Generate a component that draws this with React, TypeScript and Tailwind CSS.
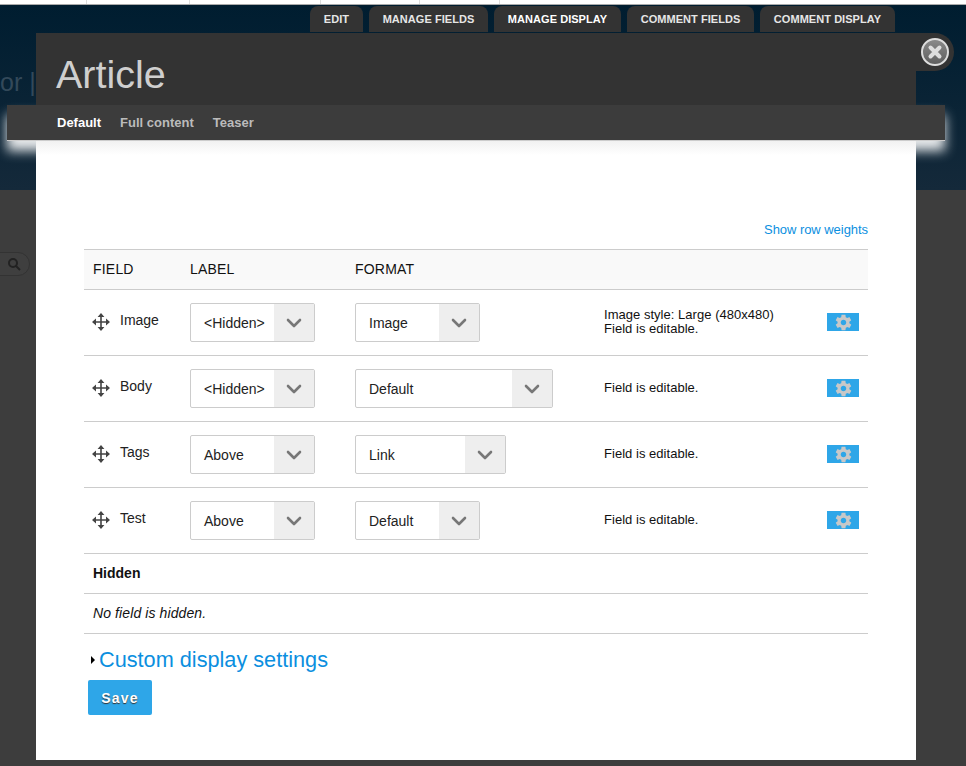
import React from "react";
import { ChevronDown } from "lucide-react";
import { IoMdSettings } from "react-icons/io";

const tabs = [
  { t: "EDIT", w: "w-[53px]" },
  { t: "MANAGE FIELDS", w: "w-[119px]" },
  { t: "MANAGE DISPLAY", w: "w-[127px]", active: true },
  { t: "COMMENT FIELDS", w: "w-[127px]" },
  { t: "COMMENT DISPLAY", w: "w-[135px]" },
];

function MoveIcon() {
  return (
    <svg width="18" height="18" viewBox="0 0 18 18" className="-mt-[1px] shrink-0">
      <path d="M9 3v12M3 9h12" stroke="#444" strokeWidth="1.6" fill="none" />
      <path d="M9 0 12.4 4H5.6zM9 18 5.6 14h6.8zM0 9 4 5.6v6.8zM18 9 14 12.4V5.6z" fill="#444" />
    </svg>
  );
}

function Select({ value, width }: { value: string; width: string }) {
  return (
    <div className={`flex h-[39px] ${width} items-stretch overflow-hidden rounded-[2px] border border-[#ccc] bg-white`}>
      <div className="flex flex-1 items-center pl-[13px] pt-[2px] text-[14px] text-[#222]">{value}</div>
      <div className="flex w-[40px] items-center justify-center bg-[#eeeeee]">
        <ChevronDown size={24} strokeWidth={2.6} className="text-[#777]" />
      </div>
    </div>
  );
}

const rows = [
  { name: "Image", label: "<Hidden>", fmt: "Image", w: "w-[125px]", lines: ["Image style: Large (480x480)", "Field is editable."] },
  { name: "Body", label: "<Hidden>", fmt: "Default", w: "w-[198px]", lines: ["Field is editable."] },
  { name: "Tags", label: "Above", fmt: "Link", w: "w-[151px]", lines: ["Field is editable."] },
  { name: "Test", label: "Above", fmt: "Default", w: "w-[125px]", lines: ["Field is editable."] },
];

export default function App() {
  return (
    <div className="relative h-[766px] w-[966px] overflow-hidden bg-[#3d3d3d] font-['Liberation_Sans',Arial,sans-serif]">
      {/* Page behind the overlay */}
      <div className="flex h-[4px] bg-white">
        <div className="w-[87px] border-r border-[#ddd]" />
        <div className="w-[103px] border-r border-[#ddd]" />
        <div className="w-[131px] border-r border-[#ddd]" />
        <div className="w-[99px] border-r border-[#ddd]" />
        <div className="w-[80px] border-r border-[#ddd]" />
      </div>
      <div className="h-[1px] bg-[#aaa]" />
      <div className="flex h-[185px] flex-col bg-gradient-to-b from-[#001d30] to-[#14293a]">
        <div className="flex justify-end gap-[6px] pr-[71px] pt-[1px]">
          {tabs.map((x) => (
            <div
              key={x.t}
              className={`flex h-[26px] ${x.w} items-center justify-center rounded-t-[8px] bg-[#333] text-[11px] font-bold tracking-[0.05px] ${x.active ? "text-white" : "text-[#e6e6e6]"}`}
            >
              {x.t}
            </div>
          ))}
        </div>
        <div className="mt-[35px] text-[25px] leading-[30px] text-[#33495a]">or |</div>
      </div>
      <div className="absolute left-[-20px] top-[252px] flex h-[24px] w-[50px] items-center justify-end rounded-full border border-[#333] bg-[#3f3f3f] pr-[8px]">
        <svg width="14" height="14" viewBox="0 0 14 14">
          <circle cx="6" cy="6" r="4" stroke="#222" strokeWidth="2" fill="none" />
          <path d="M9 9l4 4" stroke="#222" strokeWidth="2" />
        </svg>
      </div>

      {/* Modal */}
      <div className="absolute left-[36px] top-[33px] flex h-[727px] w-[880px] flex-col bg-white">
        <div className="relative z-20 h-[72px] bg-[#333] pl-[20px] pt-[17px] text-[39.5px] leading-[48px] text-[#cfcfcf]">Article</div>
        <div className="relative z-10 -ml-[29px] -mr-[29px] flex h-[36px] w-[938px] items-center gap-[19px] border-b border-[#ccc] bg-[#3c3c3c] pl-[50px] text-[13px] font-bold text-[#bbb] shadow-[0_10px_12px_0_rgba(255,255,255,0.9)]">
          <span className="text-white">Default</span>
          <span>Full content</span>
          <span>Teaser</span>
        </div>
        <div className="relative z-20 h-[14px] bg-gradient-to-b from-[#f1f1f1] to-white" />
        <div className="flex flex-1 flex-col px-[48px]">
          <div className="mt-[67px] text-right text-[13px] leading-[16px] tracking-[-0.05px] text-[#0b8fdf]">Show row weights</div>
          <div className="mt-[11px] flex h-[41px] items-center border-y border-[#ccc] bg-[#f9f9f9] text-[14px] tracking-[0.2px] text-[#111]">
            <div className="w-[106px] pl-[9px]">FIELD</div>
            <div className="w-[165px]">LABEL</div>
            <div>FORMAT</div>
          </div>
          {rows.map((r) => (
            <div key={r.name} className="flex h-[66px] items-center border-b border-[#ccc]">
              <div className="flex w-[106px] items-center gap-[10px] pl-[8px]">
                <MoveIcon />
                <span className="-mt-[5px] text-[14px] text-[#222]">{r.name}</span>
              </div>
              <div className="w-[165px]">
                <Select value={r.label} width="w-[125px]" />
              </div>
              <div className="w-[249px]">
                <Select value={r.fmt} width={r.w} />
              </div>
              <div className="-mt-[2px] flex-1 text-[13px] leading-[14px] tracking-[0.03px] text-[#111]">
                {r.lines.map((l) => (
                  <div key={l}>{l}</div>
                ))}
              </div>
              <div className="-mt-[1px] mr-[9px] flex h-[18px] w-[32px] items-center justify-center bg-[#2ea6e8]">
                <IoMdSettings size={19} className="text-[#c8c8c8]" />
              </div>
            </div>
          ))}
          <div className="flex h-[40px] items-center border-b border-[#ccc] pl-[9px] text-[14px] font-bold text-[#111]">Hidden</div>
          <div className="flex h-[40px] items-center border-b border-[#ccc] pl-[9px] text-[14px] italic tracking-[0.1px] text-[#111]">No field is hidden.</div>
          <div className="mt-[13px] flex h-[26px] items-center">
            <svg width="9" height="10" viewBox="0 0 9 10" className="ml-[5px] mr-[1px]">
              <path d="M2 1l4 4-4 4z" fill="#000" />
            </svg>
            <span className="text-[21.7px] leading-[26px] text-[#0b8fdf]">Custom display settings</span>
          </div>
          <div className="ml-[4px] mt-[7px] flex h-[35px] w-[64px] items-center justify-center rounded-[2px] bg-[#2ea6e8] pt-[1px] text-[14px] font-bold tracking-[1.2px] text-white [text-shadow:0_1px_1px_#333]">
            Save
          </div>
        </div>
      </div>

      {/* Close button */}
      <div className="absolute left-[916px] top-[33px] flex h-[38px] w-[38px] items-center justify-center rounded-r-[19px] bg-[#333]">
        <div className="flex h-[28px] w-[28px] items-center justify-center rounded-full border-2 border-[#ddd] bg-gradient-to-b from-[#8a8a8a] to-[#5f5f5f]">
          <svg width="16" height="16" viewBox="0 0 16 16">
            <path d="M3.5 3.5l9 9M12.5 3.5l-9 9" stroke="#ddd" strokeWidth="4" strokeLinecap="round" />
          </svg>
        </div>
      </div>
    </div>
  );
}
